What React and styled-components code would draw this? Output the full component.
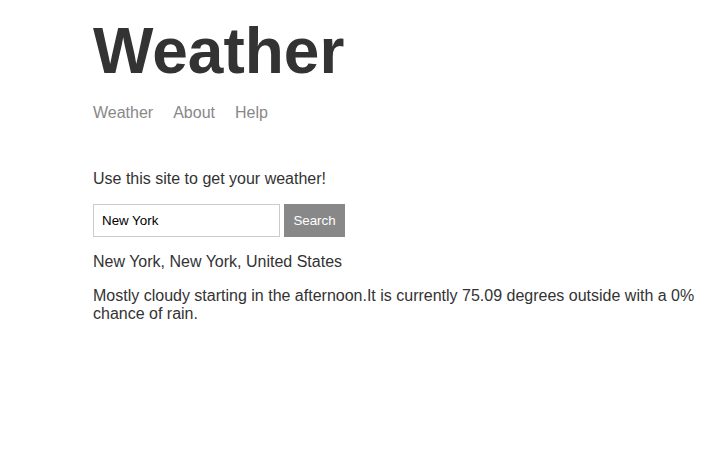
import React, { useState } from 'react';
import styled, { createGlobalStyle } from 'styled-components';

const GlobalStyle = createGlobalStyle`
  body {
    margin: 0;
    background: #ffffff;
    color: #333333;
    font-family: "Liberation Sans", Arial, sans-serif;
  }
`;

const Page = styled.div`
  width: 620px;
  margin-left: 93px;
  padding-top: 14px;
`;

const Header = styled.header`
  margin-bottom: 48px;
`;

const Title = styled.h1`
  margin: 0 0 16px;
  font-size: 64px;
  font-weight: bold;
`;

const Nav = styled.nav`
  display: flex;
  gap: 20px;
  font-size: 16px;
`;

const NavLink = styled.a`
  color: #888888;
  text-decoration: none;
`;

const Text = styled.p`
  margin: 0 0 16px;
  font-size: 16px;
`;

const Form = styled.form`
  display: flex;
  gap: 4px;
  margin-bottom: 16px;
`;

const Input = styled.input`
  box-sizing: border-box;
  width: 187px;
  height: 33px;
  padding: 8px;
  border: 1px solid #cccccc;
  font-family: "Liberation Sans", Arial, sans-serif;
  font-size: 13.33px;
  color: #000000;
  outline: none;
`;

const Button = styled.button`
  box-sizing: border-box;
  width: 61px;
  height: 33px;
  padding: 8px 0;
  border: 1px solid #888888;
  background: #888888;
  color: #ffffff;
  font-family: "Liberation Sans", Arial, sans-serif;
  font-size: 13.33px;
  cursor: pointer;
`;

export default function App() {
  const [location, setLocation] = useState('New York');

  return (
    <>
      <GlobalStyle />
      <Page>
        <Header>
          <Title>Weather</Title>
          <Nav>
            <NavLink href="#">Weather</NavLink>
            <NavLink href="#">About</NavLink>
            <NavLink href="#">Help</NavLink>
          </Nav>
        </Header>
        <Text>Use this site to get your weather!</Text>
        <Form onSubmit={(e) => e.preventDefault()}>
          <Input value={location} onChange={(e) => setLocation(e.target.value)} placeholder="Location" />
          <Button type="submit">Search</Button>
        </Form>
        <Text>New York, New York, United States</Text>
        <Text>
          Mostly cloudy starting in the afternoon.It is currently 75.09 degrees outside with a 0% chance of rain.
        </Text>
      </Page>
    </>
  );
}
